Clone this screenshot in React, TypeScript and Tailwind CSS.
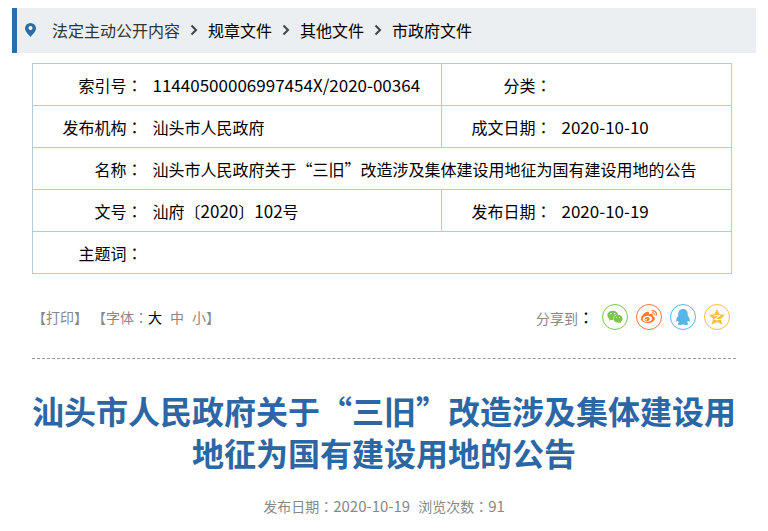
import type { ReactNode } from "react";
import { FaWeibo, FaWeixin } from "react-icons/fa";

const crumbs = ["法定主动公开内容", "规章文件", "其他文件", "市政府文件"];

function Colon() {
  return <span className="font-['Noto_Sans_CJK_TC',sans-serif]">：</span>;
}

function Num({ children }: { children: ReactNode }) {
  return <span className="text-[17px]">{children}</span>;
}

function Label({ children }: { children: ReactNode }) {
  return (
    <th
      scope="row"
      className="border-y border-l border-[#b0cae0] text-right font-normal"
    >
      {children}
      <Colon />
    </th>
  );
}

function Value({ span, children }: { span?: number; children?: ReactNode }) {
  return (
    <td
      colSpan={span}
      className="border-y border-r border-[#b0cae0] pl-[10px] whitespace-nowrap"
    >
      {children}
    </td>
  );
}

function PinIcon() {
  return (
    <svg viewBox="0 0 11 14" className="mr-4 h-[14px] w-[11px] text-[#2e6da4]">
      <path
        d="M5.5 0A5.500 5.500 0 0 0 0 5.500C0 8.500 3.500 11.500 5.500 14 7.500 11.500 11 8.500 11 5.500A5.500 5.500 0 0 0 5.500 0z"
        fill="currentColor"
      />
      <circle cx="5.500" cy="5" r="2" fill="#fff" />
    </svg>
  );
}

function QqIcon() {
  return (
    <svg viewBox="0 0 16 16" className="size-4">
      <path
        d="M8 0C5 0 3.200 2.200 3.200 5.200v1.600C2.200 8 1.200 9.700 1.200 11.400c0 1.100.4 1.500.9 1.200.3-.2.6-.5.900-.900.2.7.6 1.300 1.100 1.800-.9.3-1.300.8-1.300 1.300 0 .8 1.100 1.200 2.600 1.200 1.100 0 2-.3 2.600-.8.6.5 1.500.8 2.600.8 1.500 0 2.600-.4 2.600-1.200 0-.5-.4-1-1.300-1.300.5-.5.9-1.100 1.100-1.800.3.4.6.7.9.9.5.3.9-.1.9-1.200 0-1.700-1-3.400-2-4.600V5.200C12.800 2.200 11 0 8 0z"
        fill="currentColor"
      />
    </svg>
  );
}

function QzoneIcon() {
  return (
    <svg viewBox="0 0 16 16" className="size-4">
      <path
        d="M8 .8l2.200 4.800 5.200.6-3.900 3.500 1.100 5.300L8 12.400 3.400 15l1.100-5.300L.6 6.200l5.200-.6z"
        fill="currentColor"
        stroke="currentColor"
        strokeWidth=".8"
        strokeLinejoin="round"
      />
      <path
        d="M4.800 6.800c2-.4 4-.4 5.800 0L5.800 10.400c2.200.4 4 .4 6.200-.2"
        fill="none"
        stroke="#fff"
        strokeWidth="1.100"
      />
    </svg>
  );
}

function Share({
  name,
  className,
  children,
}: {
  name: string;
  className: string;
  children: ReactNode;
}) {
  return (
    <a
      href="#"
      aria-label={name}
      className={`flex size-[26px] items-center justify-center rounded-full border ${className}`}
    >
      {children}
    </a>
  );
}

export default function App() {
  return (
    <div className="bg-white px-3 pt-2 font-['Noto_Sans_CJK_SC',sans-serif] text-base text-black">
      <nav className="flex h-[45px] items-center border-l-5 border-[#2e6da4] bg-[#ebeff2] pb-px pl-2">
        <PinIcon />
        {crumbs.map((item, i) => (
          <div key={item} className="flex items-center">
            {i > 0 && (
              <svg viewBox="0 0 8 12" className="mx-[10px] h-3 w-2">
                <path
                  d="M1.500 1.500L6 6l-4.500 4.500"
                  fill="none"
                  stroke="#444"
                  strokeWidth="2"
                />
              </svg>
            )}
            <a href="#" className={i === 0 ? "text-[#333]" : ""}>
              {item}
            </a>
          </div>
        ))}
      </nav>

      <main className="px-5">
        <div className="pt-[10px] pr-1">
          <table className="w-full table-fixed border-collapse [&_tr]:h-[42px]">
            <colgroup>
              <col className="w-[110px]" />
              <col className="w-[299px]" />
              <col className="w-[110px]" />
              <col />
            </colgroup>
            <tbody>
              <tr>
                <Label>索引号</Label>
                <Value>
                  <Num>11440500006997454X/2020-00364</Num>
                </Value>
                <Label>分类</Label>
                <Value />
              </tr>
              <tr>
                <Label>发布机构</Label>
                <Value>汕头市人民政府</Value>
                <Label>成文日期</Label>
                <Value>
                  <Num>2020-10-10</Num>
                </Value>
              </tr>
              <tr>
                <Label>名称</Label>
                <Value span={3}>
                  汕头市人民政府关于“三旧”改造涉及集体建设用地征为国有建设用地的公告
                </Value>
              </tr>
              <tr>
                <Label>文号</Label>
                <Value>
                  汕府〔<Num>2020</Num>〕<Num>102</Num>号
                </Value>
                <Label>发布日期</Label>
                <Value>
                  <Num>2020-10-19</Num>
                </Value>
              </tr>
              <tr>
                <Label>主题词</Label>
                <Value span={3} />
              </tr>
            </tbody>
          </table>
        </div>

        <div className="flex items-center justify-between border-b border-dashed border-[#999] pt-[30px] pr-[6px] pb-7 text-sm text-[#888]">
          <div className="flex gap-1">
            <button type="button">【打印】</button>
            <div className="flex">
              <span>
                【字体
                <Colon />
              </span>
              <div className="flex gap-2">
                <button type="button" className="text-black">
                  大
                </button>
                <button type="button">中</button>
                <button type="button">小</button>
              </div>
              <span>】</span>
            </div>
          </div>
          <div className="flex items-center gap-2">
            <span>
              分享到
              <span className="text-base text-black">
                <Colon />
              </span>
            </span>
            <Share name="微信" className="border-[#7bc549] text-[#7bc549]">
              <FaWeixin className="size-4" />
            </Share>
            <Share name="微博" className="border-[#ff763b] text-[#ff763b]">
              <FaWeibo className="size-4" />
            </Share>
            <Share name="QQ" className="border-[#56b6e7] text-[#56b6e7]">
              <QqIcon />
            </Share>
            <Share name="QQ空间" className="border-[#fdbe3d] text-[#fdbe3d]">
              <QzoneIcon />
            </Share>
          </div>
        </div>

        <h1 className="mt-[30px] text-center text-[32px] leading-[42px] font-bold text-[#2d66a5]">
          汕头市人民政府关于“三旧”改造涉及集体建设用地征为国有建设用地的公告
        </h1>

        <div className="mt-[22px] flex justify-center gap-2 text-sm text-[#888]">
          <span>
            发布日期
            <Colon />
            <span className="text-[15px]">2020-10-19</span>
          </span>
          <span>
            浏览次数
            <Colon />
            <span className="text-[15px]">91</span>
          </span>
        </div>
      </main>
    </div>
  );
}
